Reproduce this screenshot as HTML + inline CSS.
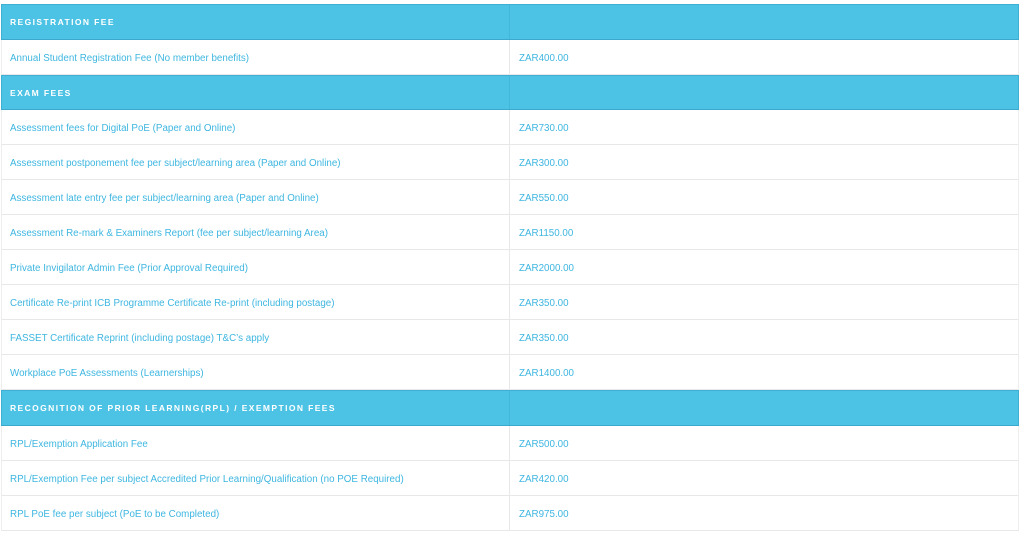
<!DOCTYPE html>
<html><head><style>
body{margin:0;background:#fff;font-family:"Liberation Sans",sans-serif;width:1024px;height:532px;overflow:hidden;position:relative}
.r{position:absolute;left:1px;width:1018px;height:35px;box-sizing:border-box;border-bottom:1px solid #e8e8e8;border-left:1px solid #eee;border-right:1px solid #eee}
.r div{position:absolute;top:0;height:100%;line-height:37px;font-size:9.8px;color:#3eb6e0}
.r .a{left:8px}.r .b{left:517px}
.r:after{content:"";position:absolute;left:507px;top:0;bottom:0;width:1px;background:#e8e8e8}
.h{background:#4cc2e4;border:1px solid #3fb0d4;border-bottom:1px solid #3ba8cc}
.h:after{background:#44b6d8}
.h div{color:#fff;font-weight:bold;font-size:8.5px;letter-spacing:1.4px;line-height:34px}
</style></head><body>
<div class="r h" style="top:4px;height:36px"><div class="a">REGISTRATION FEE</div></div>
<div class="r" style="top:40px"><div class="a">Annual Student Registration Fee (No member benefits)</div><div class="b">ZAR400.00</div></div>
<div class="r h" style="top:75px"><div class="a">EXAM FEES</div></div>
<div class="r" style="top:110px"><div class="a">Assessment fees for Digital PoE (Paper and Online)</div><div class="b">ZAR730.00</div></div>
<div class="r" style="top:145px"><div class="a">Assessment postponement fee per subject/learning area (Paper and Online)</div><div class="b">ZAR300.00</div></div>
<div class="r" style="top:180px"><div class="a">Assessment late entry fee per subject/learning area (Paper and Online)</div><div class="b">ZAR550.00</div></div>
<div class="r" style="top:215px"><div class="a">Assessment Re-mark &amp; Examiners Report (fee per subject/learning Area)</div><div class="b">ZAR1150.00</div></div>
<div class="r" style="top:250px"><div class="a">Private Invigilator Admin Fee (Prior Approval Required)</div><div class="b">ZAR2000.00</div></div>
<div class="r" style="top:285px"><div class="a">Certificate Re-print ICB Programme Certificate Re-print (including postage)</div><div class="b">ZAR350.00</div></div>
<div class="r" style="top:320px"><div class="a">FASSET Certificate Reprint (including postage) T&amp;C’s apply</div><div class="b">ZAR350.00</div></div>
<div class="r" style="top:355px"><div class="a">Workplace PoE Assessments (Learnerships)</div><div class="b">ZAR1400.00</div></div>
<div class="r h" style="top:390px;height:36px"><div class="a">RECOGNITION OF PRIOR LEARNING(RPL) / EXEMPTION FEES</div></div>
<div class="r" style="top:426px"><div class="a">RPL/Exemption Application Fee</div><div class="b">ZAR500.00</div></div>
<div class="r" style="top:461px"><div class="a">RPL/Exemption Fee per subject Accredited Prior Learning/Qualification (no POE Required)</div><div class="b">ZAR420.00</div></div>
<div class="r" style="top:496px"><div class="a">RPL PoE fee per subject (PoE to be Completed)</div><div class="b">ZAR975.00</div></div>
</body></html>
